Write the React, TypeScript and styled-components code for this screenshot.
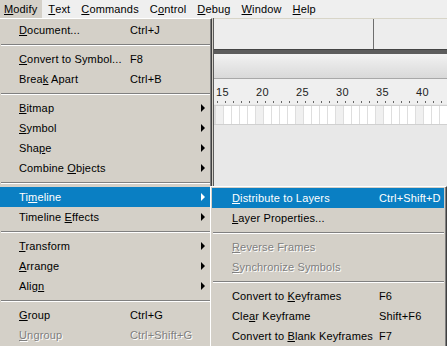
import styled, { createGlobalStyle } from 'styled-components';

const GlobalStyle = createGlobalStyle`
  html, body {
    margin: 0;
    padding: 0;
  }
  body {
    font-family: 'Liberation Sans', Arial, sans-serif;
    font-size: 11px;
    letter-spacing: 0.15px;
    color: #000;
  }
`;

type Item =
  | { sep: true }
  | {
      sep?: false;
      label: React.ReactNode;
      shortcut?: string;
      sub?: boolean;
      active?: boolean;
      disabled?: boolean;
    };

const mainItems: Item[] = [
  { label: <><u>D</u>ocument...</>, shortcut: 'Ctrl+J' },
  { sep: true },
  { label: <><u>C</u>onvert to Symbol...</>, shortcut: 'F8' },
  { label: <>Brea<u>k</u> Apart</>, shortcut: 'Ctrl+B' },
  { sep: true },
  { label: <><u>B</u>itmap</>, sub: true },
  { label: <><u>S</u>ymbol</>, sub: true },
  { label: <>Sha<u>p</u>e</>, sub: true },
  { label: <>Combine <u>O</u>bjects</>, sub: true },
  { sep: true },
  { label: <>Ti<u>m</u>eline</>, sub: true, active: true },
  { label: <>Timeline <u>E</u>ffects</>, sub: true },
  { sep: true },
  { label: <><u>T</u>ransform</>, sub: true },
  { label: <><u>A</u>rrange</>, sub: true },
  { label: <>Alig<u>n</u></>, sub: true },
  { sep: true },
  { label: <><u>G</u>roup</>, shortcut: 'Ctrl+G' },
  { label: <><u>U</u>ngroup</>, shortcut: 'Ctrl+Shift+G', disabled: true },
];

const subItems: Item[] = [
  { label: <><u>D</u>istribute to Layers</>, shortcut: 'Ctrl+Shift+D', active: true },
  { label: <><u>L</u>ayer Properties...</> },
  { sep: true },
  { label: <><u>R</u>everse Frames</>, disabled: true },
  { label: <><u>S</u>ynchronize Symbols</>, disabled: true },
  { sep: true },
  { label: <>Convert to <u>K</u>eyframes</>, shortcut: 'F6' },
  { label: <>Cle<u>a</u>r Keyframe</>, shortcut: 'Shift+F6' },
  { label: <>Convert to <u>B</u>lank Keyframes</>, shortcut: 'F7' },
];

const barItems = [
  <><u>M</u>odify</>,
  <><u>T</u>ext</>,
  <><u>C</u>ommands</>,
  <>C<u>o</u>ntrol</>,
  <><u>D</u>ebug</>,
  <><u>W</u>indow</>,
  <><u>H</u>elp</>,
];

const frameNumbers = [15, 20, 25, 30, 35, 40];

const MenuList = ({ items, labelWidth, indent }: { items: Item[]; labelWidth: number; indent: number }) => (
  <>
    {items.map((item, i) =>
      item.sep ? (
        <Separator key={i} />
      ) : (
        <Row key={i} $active={item.active} $disabled={item.disabled} $indent={indent}>
          <Label $width={labelWidth}>{item.label}</Label>
          <Shortcut>{item.shortcut}</Shortcut>
          {item.sub && <Arrow $active={item.active} />}
        </Row>
      )
    )}
  </>
);

const App = () => {
  return (
    <Screen>
      <GlobalStyle />
      <MenuBar>
        {barItems.map((b, i) => (
          <BarItem key={i} $open={i === 0}>
            {b}
          </BarItem>
        ))}
      </MenuBar>

      {/* app behind the menus */}
      <Workspace>
        <LayerPanel />
        <TimelinePanel>
          <ToolRow>
            <ToolCell />
            <ToolCell $last />
          </ToolRow>
          <DarkBar />
          <HeaderStrip />
          <Ruler>
            <RulerNumbers>
              {frameNumbers.map((n) => (
                <RulerNumber key={n}>{n}</RulerNumber>
              ))}
            </RulerNumbers>
            <Ticks />
          </Ruler>
          <FrameRow>
            {Array.from({ length: 30 }, (_, i) => (
              <Frame key={i} $keyed={i % 5 === 0} />
            ))}
          </FrameRow>
        </TimelinePanel>
      </Workspace>

      <MainMenu>
        <MenuList items={mainItems} labelWidth={111} indent={19} />
      </MainMenu>

      <SubMenu>
        <MenuList items={subItems} labelWidth={147} indent={20} />
      </SubMenu>
    </Screen>
  );
};

// screen
const Screen = styled.div`
  position: relative;
  width: 447px;
  height: 346px;
  overflow: hidden;
  background: #e6e6e6;
`;

// menu bar
const MenuBar = styled.div`
  display: flex;
  height: 18px;
  background: #efefef;
  gap: 2px;
`;

const BarItem = styled.div<{ $open?: boolean }>`
  display: flex;
  align-items: center;
  padding: 0 5px 0 4px;
  background: ${(p) => (p.$open ? '#d4d0c8' : 'transparent')};
`;

// workspace
const Workspace = styled.div`
  display: flex;
  height: 328px;
`;

const LayerPanel = styled.div`
  width: 213px;
  flex: none;
  background: #d4d0c8;
`;

const TimelinePanel = styled.div`
  flex: 1;
  min-width: 0;
  overflow: hidden;
  display: flex;
  flex-direction: column;
  border-left: 1px solid #5a5a5a;
  background: #e8e8e8;
`;

const ToolRow = styled.div`
  display: flex;
  height: 30px;
  border-top: 1px solid #d8d5c8;
  background: #ededed;
`;

const ToolCell = styled.div<{ $last?: boolean }>`
  width: ${(p) => (p.$last ? 'auto' : '159px')};
  flex: ${(p) => (p.$last ? 1 : 'none')};
  border-right: ${(p) => (p.$last ? 'none' : '1px solid #6e6e6e')};
`;

const DarkBar = styled.div`
  height: 4px;
  background: #5c5c5c;
  border-top: 1px solid #444;
`;

const HeaderStrip = styled.div`
  height: 24px;
  background: linear-gradient(#f2f2f2, #d9d9d9);
  border-bottom: 1px solid #a8a8a8;
`;

const Ruler = styled.div`
  height: 25px;
  display: flex;
  flex-direction: column;
  background: #efefef;
`;

const RulerNumbers = styled.div`
  display: flex;
  padding: 7px 0 0 2px;
  height: 15px;
`;

const RulerNumber = styled.span`
  width: 40px;
  flex: none;
  font-size: 11px;
  letter-spacing: 0.5px;
  color: #222;
`;

const Ticks = styled.div`
  height: 2px;
  margin-left: 3px;
  background: repeating-linear-gradient(to right, #666 0 1px, transparent 1px 8px);
`;

const FrameRow = styled.div`
  display: flex;
  height: 18px;
  margin-top: 1px;
  padding-left: 2px;
  background: #dcdcdc;
  border-top: 1px solid #d0d0d0;
  border-bottom: 1px solid #d0d0d0;
`;

const Frame = styled.div<{ $keyed?: boolean }>`
  width: 7px;
  flex: none;
  border-right: 1px solid #dedede;
  background: ${(p) => (p.$keyed ? '#f0f0f0' : '#ffffff')};
`;

// menus
const MainMenu = styled.div`
  position: absolute;
  left: 0;
  top: 18px;
  width: 211px;
  height: 330px;
  padding-top: 1px;
  background: #d4d0c8;
  border-top: 1px solid #ffffff;
  border-right: 1px solid #404040;
  box-shadow: inset -1px 0 #808080;
`;

const SubMenu = styled.div`
  position: absolute;
  left: 210px;
  top: 186px;
  width: 233px;
  height: 170px;
  padding: 1px;
  background: #d4d0c8;
  border-top: 1px solid #ffffff;
  border-left: 1px solid #ffffff;
  border-right: 1px solid #404040;
  box-shadow: inset -1px 0 #808080;
`;

const Row = styled.div<{ $active?: boolean; $disabled?: boolean; $indent: number }>`
  position: relative;
  display: flex;
  align-items: center;
  height: 20px;
  margin-right: 1px;
  padding-left: ${(p) => p.$indent}px;
  white-space: nowrap;
  background: ${(p) => (p.$active ? '#0a7fc3' : 'transparent')};
  color: ${(p) => (p.$active ? '#ffffff' : p.$disabled ? '#808080' : '#000000')};
  text-shadow: ${(p) => (p.$disabled ? '1px 1px 0 #ffffff' : 'none')};
`;

const Label = styled.span<{ $width: number }>`
  width: ${(p) => p.$width}px;
  flex: none;
`;

const Shortcut = styled.span`
  flex: 1;
`;

const Arrow = styled.span<{ $active?: boolean }>`
  position: absolute;
  right: 5px;
  top: 6px;
  width: 0;
  height: 0;
  border-top: 4px solid transparent;
  border-bottom: 4px solid transparent;
  border-left: 4px solid ${(p) => (p.$active ? '#ffffff' : '#000000')};
`;

const Separator = styled.div`
  height: 0;
  margin: 4px 1px 3px;
  border-top: 1px solid #808080;
  border-bottom: 1px solid #ffffff;
`;

export default App;
